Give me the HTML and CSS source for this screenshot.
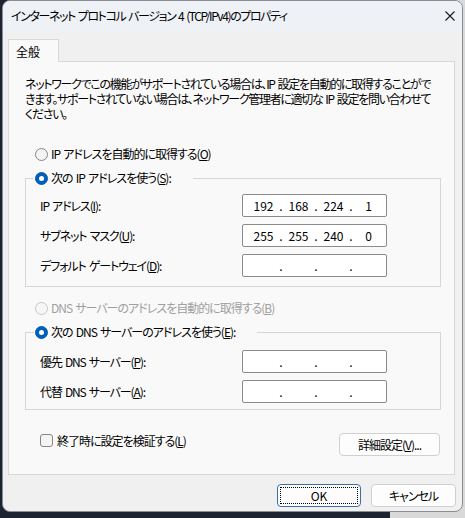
FILE: index.html
```html
<!DOCTYPE html>
<html lang="ja">
<head>
<meta charset="utf-8">
<title>IPv4 のプロパティ</title>
<link rel="stylesheet" href="styles.css">
</head>
<body>
<div class="window">
  <div class="titlebar">
    <span class="title">インターネット プロトコル バージョン 4 (TCP/IPv4)のプロパティ</span>
    <svg class="close" width="10" height="10" viewBox="0 0 10 10"><path d="M0.5 0.5 L9.5 9.5 M9.5 0.5 L0.5 9.5" stroke="#1a1a1a" stroke-width="1.1" fill="none"/></svg>
  </div>
  <div class="content">
    <div class="tabs"><div class="tab">全般</div></div>
    <div class="panel">
      <p class="intro">ネットワークでこの機能がサポートされている場合は、IP 設定を自動的に取得することがで<br>きます。サポートされていない場合は、ネットワーク管理者に適切な IP 設定を問い合わせて<br>ください。</p>

      <div class="radio-row first"><span class="radio"></span><span>IP アドレスを自動的に取得する(<u>O</u>)</span></div>

      <fieldset class="group group-ip">
        <legend><span class="radio-row"><span class="radio on"></span><span>次の IP アドレスを使う(<u>S</u>):</span></span></legend>
        <div class="grid">
          <span class="lbl">IP アドレス(<u>I</u>):</span>
          <div class="ipbox"><span class="seg">192</span><span class="dot">.</span><span class="seg">168</span><span class="dot">.</span><span class="seg">224</span><span class="dot">.</span><span class="seg">1</span></div>
          <span class="lbl">サブネット マスク(<u>U</u>):</span>
          <div class="ipbox"><span class="seg">255</span><span class="dot">.</span><span class="seg">255</span><span class="dot">.</span><span class="seg">240</span><span class="dot">.</span><span class="seg">0</span></div>
          <span class="lbl">デフォルト ゲートウェイ(<u>D</u>):</span>
          <div class="ipbox"><span class="seg"></span><span class="dot">.</span><span class="seg"></span><span class="dot">.</span><span class="seg"></span><span class="dot">.</span><span class="seg"></span></div>
        </div>
      </fieldset>

      <div class="radio-row dns-auto disabled"><span class="radio"></span><span>DNS サーバーのアドレスを自動的に取得する(<u>B</u>)</span></div>

      <fieldset class="group group-dns">
        <legend><span class="radio-row"><span class="radio on"></span><span>次の DNS サーバーのアドレスを使う(<u>E</u>):</span></span></legend>
        <div class="grid">
          <span class="lbl">優先 DNS サーバー(<u>P</u>):</span>
          <div class="ipbox"><span class="seg"></span><span class="dot">.</span><span class="seg"></span><span class="dot">.</span><span class="seg"></span><span class="dot">.</span><span class="seg"></span></div>
          <span class="lbl">代替 DNS サーバー(<u>A</u>):</span>
          <div class="ipbox"><span class="seg"></span><span class="dot">.</span><span class="seg"></span><span class="dot">.</span><span class="seg"></span><span class="dot">.</span><span class="seg"></span></div>
        </div>
      </fieldset>

      <div class="footer-row">
        <div class="check-row"><span class="checkbox"></span><span>終了時に設定を検証する(<u>L</u>)</span></div>
        <button class="btn btn-adv">詳細設定(<u>V</u>)...</button>
      </div>
    </div>
    <div class="actions">
      <button class="btn btn-ok"><span class="focus">OK</span></button>
      <button class="btn btn-cancel">キャンセル</button>
    </div>
  </div>
</div>
</body>
</html>
```
FILE: styles.css
```css
* { box-sizing: border-box; }

html, body {
  margin: 0;
  padding: 0;
}

body {
  width: 465px;
  height: 518px;
  overflow: hidden;
  background: linear-gradient(90deg, #1d2331 0, #1d2331 390px, #d9d9d9 390px);
  font-family: "Noto Sans CJK JP", "Noto Sans", sans-serif;
  font-feature-settings: "palt";
  font-size: 12px;
  letter-spacing: -1px;
  word-spacing: 1.5px;
  color: #000;
}

.window {
  margin-left: 2px;
  width: 461px;
  height: 512px;
  background: #f0f0f0;
  border: 1px solid #8a8d93;
  border-radius: 8px;
  overflow: hidden;
}

.titlebar {
  height: 30px;
  display: flex;
  align-items: center;
  justify-content: space-between;
  padding: 0 7px 0 8px;
  background: #eef2f7;
}

.title {
  line-height: 16px;
  white-space: nowrap;
  letter-spacing: -1.4px;
}

.close { display: block; }

.content {
  padding: 8px 0 0 5px;
}

.tabs { display: flex; }

.tab {
  position: relative;
  z-index: 1;
  width: 51px;
  height: 23px;
  margin-bottom: -1px;
  padding-left: 7px;
  display: flex;
  align-items: center;
  letter-spacing: 0;
  background: #f9f9f9;
  border: 1px solid #d9d9d9;
  border-bottom: none;
}

.panel {
  width: 447px;
  height: 414px;
  background: #f9f9f9;
  border: 1px solid #d9d9d9;
  padding: 14px 13px 0 16px;
}

.intro {
  margin: 0;
  line-height: 15px;
  white-space: nowrap;
  letter-spacing: -1.3px;
}

.radio-row {
  display: flex;
  align-items: center;
  height: 20px;
  line-height: 20px;
  white-space: nowrap;
}

.radio-row.first { margin: 23px 0 0 10px; }
.radio-row.dns-auto { margin: 11px 0 0 10px; }
.radio-row.disabled { color: #9f9f9f; }

.radio {
  width: 13px;
  height: 13px;
  margin-right: 3px;
  border-radius: 50%;
  border: 1px solid #868686;
  background: #f4f4f4;
  flex: none;
}

.disabled .radio {
  border-color: #c6c6c6;
  background: #f7f7f7;
}

.radio.on {
  display: flex;
  align-items: center;
  justify-content: center;
  background: #005fb8;
  border-color: #005fb8;
}

.radio.on::after {
  content: "";
  width: 5px;
  height: 5px;
  border-radius: 50%;
  background: #fff;
}

.group {
  margin: 4px 0 0 0;
  min-width: 0;
  border: 1px solid #d6d6d6;
  padding: 6px 0 9px 14px;
}

.group-dns { padding: 8px 0 6px 14px; }

.group legend {
  margin-left: -6px;
  padding: 0 22px 0 1px;
}

.grid {
  display: grid;
  grid-template-columns: 202px 145px;
  row-gap: 7px;
  align-items: center;
}

.lbl {
  line-height: 20px;
  white-space: nowrap;
  letter-spacing: -1.1px;
}

.ipbox {
  width: 145px;
  height: 23px;
  display: flex;
  align-items: center;
  padding-left: 6px;
  letter-spacing: 0;
  background: #fff;
  border: 1px solid #8b8b8b;
  border-radius: 2px;
}

.seg {
  width: 29px;
  text-align: center;
}

.dot {
  width: 6px;
  text-align: center;
}

.footer-row {
  margin-top: 20px;
  display: flex;
  justify-content: space-between;
  align-items: flex-start;
}

.check-row {
  display: flex;
  align-items: center;
  height: 20px;
  margin-left: 15px;
  white-space: nowrap;
}

.checkbox {
  width: 13px;
  height: 13px;
  margin-right: 4px;
  border: 1px solid #868686;
  border-radius: 3px;
  background: #f4f4f4;
}

.btn {
  height: 23px;
  padding: 0;
  font: inherit;
  letter-spacing: -1px;
  color: #000;
  background: #fdfdfd;
  border: 1px solid #d0d0d0;
  border-radius: 4px;
  display: flex;
  align-items: center;
  justify-content: center;
}

.btn-adv {
  width: 101px;
  margin: 3px 1px 0 0;
}

.actions {
  margin-top: 9px;
  padding-right: 6px;
  display: flex;
  justify-content: flex-end;
  gap: 10px;
}

.btn-ok {
  width: 84px;
  border-color: #3a6ea8;
  padding: 2px;
  letter-spacing: 0;
}

.focus {
  width: 100%;
  height: 100%;
  display: flex;
  align-items: center;
  justify-content: center;
  border: 1px dotted #000;
}

.btn-cancel { width: 85px; }
```
